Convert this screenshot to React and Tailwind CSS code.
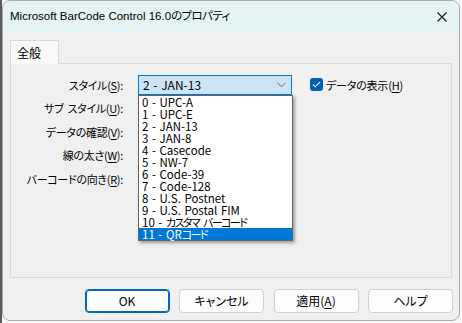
import React from 'react';

const ui = "font-['Noto_Sans_CJK_JP','Noto_Sans',sans-serif] [font-feature-settings:'palt']";

const Acc = ({ pre, k, post = ')' }) => (
    <span>
        {pre}(<span className="underline underline-offset-2">{k}</span>{post}
    </span>
);

const gap = <span className="inline-block w-[4px]" />;

// [latin prefix, narrow kana part]
const options = [
    ['0 - UPC-A', null],
    ['1 - UPC-E', null],
    ['2 - JAN-13', null],
    ['3 - JAN-8', null],
    ['4 - Casecode', null],
    ['5 - NW-7', null],
    ['6 - Code-39', null],
    ['7 - Code-128', null],
    ['8 - U.S. Postnet', null],
    ['9 - U.S. Postal FIM', null],
    ['10 - ', <>カスタマ{gap}バーコード</>],
    ['11 - QR', 'コード'],
];

const labels = [
    { pre: <>サブ{gap}スタイル</>, k: 'U' },
    { pre: 'データの確認', k: 'V' },
    { pre: '線の太さ', k: 'W' },
    { pre: 'バーコードの向き', k: 'R' },
];

const Button = ({ children, primary }) => (
    <div
        className={`w-[85px] h-[24px] rounded-[4px] bg-[#fdfdfd] flex items-center justify-center text-[12px] text-black ${
            primary ? 'border border-[#0067c0] shadow-[inset_0_0_0_1px_#0067c0]' : 'border border-[#d0d0d0]'
        }`}
    >
        {children}
    </div>
);

export default function App() {
    return (
        <div className={`w-[462px] h-[323px] bg-[#f7f7f7] flex overflow-hidden ${ui}`}>
            <div className="w-[2px] h-full bg-[#5a5a5a]" />
            <div className="w-[458px] h-[321px] rounded-[8px] border border-[#ababab] bg-[#f0f0f0] overflow-hidden flex flex-col">
                {/* Title bar */}
                <div className="h-[31px] shrink-0 bg-[#e4f3f4] flex items-center justify-between pl-[7px] pr-[8px]">
                    <span className="text-[11.5px] text-black font-['Liberation_Sans','Noto_Sans_CJK_JP',sans-serif] [font-feature-settings:'palt']">
                        Microsoft BarCode Control 16.0<span className="tracking-[-0.6px]">のプロパティ</span>
                    </span>
                    <svg width="10" height="10" viewBox="0 0 10 10" className="mr-[4px]">
                        <path d="M0.5 0.5 L9.5 9.5 M9.5 0.5 L0.5 9.5" stroke="#1a1a1a" strokeWidth="1.1" />
                    </svg>
                </div>

                {/* Tabs */}
                <div className="pl-[7px] pt-[7px] flex">
                    <div className="w-[49px] h-[24px] bg-[#f9f9f9] border border-b-0 border-[#d9d9d9] flex items-center pl-[6px] text-[12px] text-black relative top-[1px]">
                        全般
                    </div>
                </div>

                {/* Panel */}
                <div className="ml-[7px] mr-[7px] h-[215px] border border-[#d9d9d9] bg-[#f0f0f0] flex pt-[9px]">
                    <div className="w-[112px] flex flex-col">
                        <div className="h-[23.5px] flex items-center justify-end text-[11px] tracking-[-0.3px] text-black">
                            <Acc pre="スタイル" k="S" post="):" />
                        </div>
                        {labels.map((l) => (
                            <div key={l.k} className="h-[23.5px] flex items-center justify-end text-[11px] tracking-[-0.3px] text-black">
                                <Acc pre={l.pre} k={l.k} post="):" />
                            </div>
                        ))}
                    </div>
                    <div className="ml-[15px] h-[23.5px] flex items-center">
                        <div className="relative">
                            <div className="w-[154px] h-[20px] bg-[#cce4f7] border border-[#0078d4] flex items-center justify-between pl-[4px] pr-[5px] text-[12px] text-black">
                                <span className="[word-spacing:1px]">2 - JAN-13</span>
                                <svg width="9" height="6" viewBox="0 0 9 6">
                                    <path d="M0.5 0.8 L4.5 4.8 L8.5 0.8" fill="none" stroke="#606060" strokeWidth="1" />
                                </svg>
                            </div>
                            {/* Dropdown list */}
                            <div className="absolute left-0 top-full w-[155px] bg-white border border-[#646464] shadow-[2px_2px_3px_rgba(0,0,0,0.35)] z-10">
                                {options.map(([a, b], i) => (
                                    <div
                                        key={a}
                                        className={`h-[12px] leading-[12px] pl-[3px] text-[11.5px] [word-spacing:1px] whitespace-pre ${
                                            i === 11 ? 'bg-[#0078d7] text-white' : 'text-black'
                                        }`}
                                    >
                                        {a}
                                        {b && <span className="text-[11px] tracking-[-1.6px]">{b}</span>}
                                    </div>
                                ))}
                            </div>
                        </div>
                        <div className="ml-[18px] flex items-center gap-[3px] text-[11px] tracking-[-0.2px] text-black">
                            <div className="w-[13px] h-[13px] rounded-[3px] bg-[#005fb8] flex items-center justify-center">
                                <svg width="9" height="7" viewBox="0 0 9 7">
                                    <path d="M1 3.6 L3.3 5.8 L8 1.2" fill="none" stroke="white" strokeWidth="1.1" />
                                </svg>
                            </div>
                            <Acc pre="データの表示" k="H" />
                        </div>
                    </div>
                </div>

                {/* Buttons */}
                <div className="flex justify-end gap-[9.5px] pr-[6px] mt-[11px]">
                    <Button primary>OK</Button>
                    <Button>キャンセル</Button>
                    <Button>
                        <Acc pre="適用" k="A" />
                    </Button>
                    <Button>ヘルプ</Button>
                </div>
            </div>
        </div>
    );
}
